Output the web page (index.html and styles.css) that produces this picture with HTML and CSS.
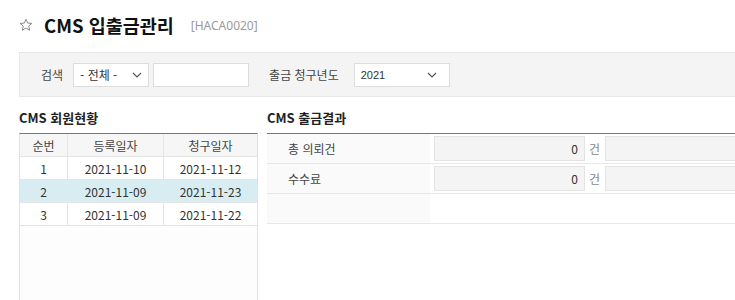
FILE: index.html
```html
<!DOCTYPE html>
<html lang="ko">
  <head>
    <meta charset="UTF-8" />
    <meta name="viewport" content="width=device-width, initial-scale=1.0" />
    <title>CMS 입출금관리</title>
    <link rel="stylesheet" href="styles.css">
  </head>

  <body>
    <div id="page">
      <div class="page-title">
        <svg class="star" width="14" height="14" viewBox="0 0 14 14">
          <path d="M7 1.2 L8.7 5.1 L12.9 5.4 L9.7 8.1 L10.7 12.3 L7 10 L3.3 12.3 L4.3 8.1 L1.1 5.4 L5.3 5.1 Z" fill="none" stroke="#8a8a8a" stroke-width="1" stroke-linejoin="round" />
        </svg>
        <h1>CMS 입출금관리</h1>
        <span class="code">[HACA0020]</span>
      </div>

      <div class="search-box">
        <label class="lbl">검색</label>
        <div class="sel sel-kind">
          <span>- 전체 -</span>
          <svg width="10" height="6" viewBox="0 0 10 6"><path d="M1 1 L5 5 L9 1" fill="none" stroke="#555" stroke-width="1.2" /></svg>
        </div>
        <input type="text" class="txt" />
        <label class="lbl lbl-year">출금 청구년도</label>
        <div class="sel sel-year">
          <span>2021</span>
          <svg width="10" height="6" viewBox="0 0 10 6"><path d="M1 1 L5 5 L9 1" fill="none" stroke="#555" stroke-width="1.2" /></svg>
        </div>
      </div>

      <div class="content">
        <div class="panel-left">
          <h2>CMS 회원현황</h2>
          <div class="grid">
            <table class="grid-table">
              <thead>
                <tr>
                  <th class="c-no">순번</th>
                  <th class="c-date">등록일자</th>
                  <th>청구일자</th>
                </tr>
              </thead>
              <tbody>
                <tr>
                  <td>1</td>
                  <td>2021-11-10</td>
                  <td>2021-11-12</td>
                </tr>
                <tr class="selected">
                  <td>2</td>
                  <td>2021-11-09</td>
                  <td>2021-11-23</td>
                </tr>
                <tr>
                  <td>3</td>
                  <td>2021-11-09</td>
                  <td>2021-11-22</td>
                </tr>
              </tbody>
            </table>
          </div>
        </div>

        <div class="panel-right">
          <h2>CMS 출금결과</h2>
          <table class="form-table">
            <tr>
              <th>총 의뢰건</th>
              <td>
                <div class="val-row">
                  <input type="text" class="num" value="0" disabled />
                  <span class="unit">건</span>
                  <input type="text" class="wide" disabled />
                </div>
              </td>
            </tr>
            <tr>
              <th>수수료</th>
              <td>
                <div class="val-row">
                  <input type="text" class="num" value="0" disabled />
                  <span class="unit">건</span>
                  <input type="text" class="wide" disabled />
                </div>
              </td>
            </tr>
            <tr>
              <th></th>
              <td></td>
            </tr>
          </table>
        </div>
      </div>
    </div>
  </body>
</html>
```

FILE: styles.css
```css
html,
body {
  overflow: hidden;
}

body {
  margin: 0;
  background: #fff;
  color: #333;
  font-family: "Noto Sans CJK KR", "Noto Sans", sans-serif;
  font-size: 12px;
}

#page {
  padding: 0 19px;
  width: 800px;
}

.page-title {
  display: flex;
  align-items: center;
  height: 38px;
  padding-top: 14px;
  box-sizing: border-box;
  padding-bottom: 2px;
}

.page-title .star {
  margin-right: 11px;
}

.page-title h1 {
  margin: 0;
  font-size: 18.5px;
  font-weight: bold;
  color: #111;
}

.page-title .code {
  margin-left: 17px;
  font-size: 12px;
  color: #9a9a9a;
  font-family: "Noto Sans", sans-serif;
}

.search-box {
  display: flex;
  align-items: center;
  height: 43px;
  margin-top: 14px;
  padding-left: 21px;
  background: #f4f4f4;
  border: 1px solid #e8e8e8;
  border-right: none;
}

.lbl {
  color: #444;
  margin-right: 10px;
}

.lbl-year {
  margin-left: 20px;
  margin-right: 15px;
}

.sel {
  display: flex;
  align-items: center;
  justify-content: space-between;
  box-sizing: border-box;
  height: 24px;
  padding: 0 6px 0 6px;
  background: #fff;
  border: 1px solid #ddd;
}

.sel-kind {
  width: 76px;
}

.sel-year {
  width: 96px;
  padding-right: 12px;
  font-family: "Liberation Sans", sans-serif;
  font-size: 11px;
}

.txt {
  box-sizing: border-box;
  width: 96px;
  height: 24px;
  margin-left: 4px;
  border: 1px solid #ddd;
  outline: none;
}

.content {
  display: flex;
  margin-top: 11px;
}

.content h2 {
  margin: 0 0 5px 0;
  height: 20px;
  line-height: 20px;
  font-size: 13px;
  font-weight: bold;
  color: #222;
}

.panel-left {
  width: 239px;
}

.panel-right {
  flex-grow: 1;
  margin-left: 9px;
}

.grid {
  height: 220px;
  border: 1px solid #e2e2e2;
  border-top: 1px solid #777;
  background: #fdfdfd;
}

.grid-table {
  width: 100%;
  border-collapse: collapse;
  background: #fff;
}

.grid-table th,
.grid-table td {
  height: 22px;
  padding: 0;
  text-align: center;
  border: 1px solid #e6e6e6;
  font-weight: normal;
  color: #333;
}

.grid-table tr > :first-child {
  border-left: none;
}

.grid-table tr > :last-child {
  border-right: none;
}

.grid-table th {
  height: 22px;
  border-top: none;
  background: #f6f6f6;
  color: #444;
}

.grid-table .c-no {
  width: 47px;
}

.grid-table .c-date {
  width: 95px;
}

.grid-table tbody tr:last-child td {
  border-bottom: 1px solid #e2e2ea;
}

.grid-table tr.selected td {
  background: #d8edf1;
}

.form-table {
  width: 100%;
  border-collapse: collapse;
  border-top: 1px solid #777;
}

.form-table th,
.form-table td {
  height: 29px;
  padding: 0;
  border-bottom: 1px solid #e8e8e8;
}

.form-table th {
  width: 163px;
  padding-left: 21px;
  box-sizing: border-box;
  text-align: left;
  font-weight: normal;
  color: #444;
  background: #fafafa;
}

.form-table td {
  padding-left: 4px;
}

.val-row {
  display: flex;
  align-items: center;
}

.val-row input {
  box-sizing: border-box;
  height: 25px;
  margin: 0;
  border: 1px solid #e3e3e3;
  background: #f4f4f4;
  font-family: "Noto Sans CJK KR", sans-serif;
  font-size: 12px;
  color: #333;
}

.val-row .num {
  width: 151px;
  text-align: right;
  padding-right: 6px;
}

.val-row .unit {
  width: 20px;
  padding-left: 4px;
  box-sizing: border-box;
  color: #888;
}

.val-row .wide {
  flex-grow: 1;
}
```
